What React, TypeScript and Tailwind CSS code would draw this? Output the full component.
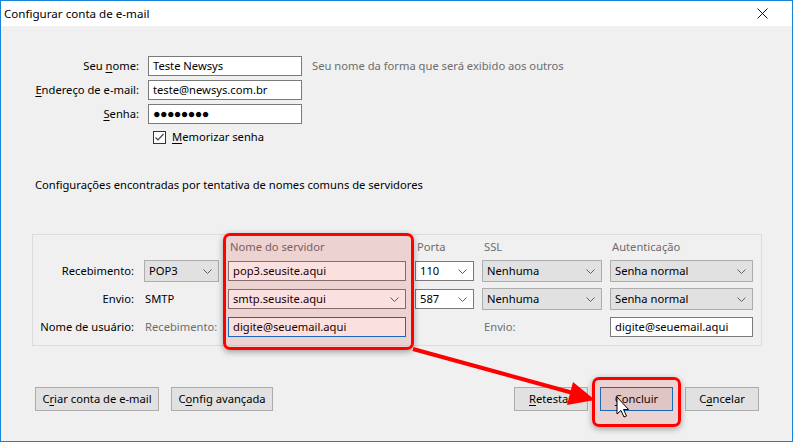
import React from "react";

const font = { fontFamily: '"Noto Sans", "Segoe UI", Arial, sans-serif' };

function Chevron({ className = "" }: { className?: string }) {
  return (
    <svg width="9" height="5" viewBox="0 0 9 5" className={className}>
      <path d="M0.5 0.5 L4.5 4.5 L8.5 0.5" fill="none" stroke="#606060" strokeWidth="1" />
    </svg>
  );
}

function TextBox({ value, w, focus = false }: { value: string; w: string; focus?: boolean }) {
  return (
    <div
      className={`${w} h-[20px] bg-white border flex items-center pl-[4px] text-black ${
        focus ? "border-[#0078d7]" : "border-[#7a7a7a]"
      }`}
    >
      {value}
    </div>
  );
}

function Select({ value, w, white = false }: { value: string; w: string; white?: boolean }) {
  return (
    <div
      className={`${w} flex items-center justify-between border pl-[4px] pr-[6px] ${
        white ? "h-[20px] bg-white border-[#7a7a7a]" : "h-[22px] bg-[#e1e1e1] border-[#adadad]"
      }`}
    >
      <span>{value}</span>
      <Chevron />
    </div>
  );
}

function Button({ children, w, primary = false }: { children: React.ReactNode; w: string; primary?: boolean }) {
  return (
    <div
      className={`${w} h-[24px] flex items-center justify-center bg-[#e1e1e1] border ${
        primary ? "border-[#0078d7]" : "border-[#adadad]"
      }`}
    >
      {children}
    </div>
  );
}

export default function App() {
  return (
    <div
      style={font}
      className="relative w-[793px] h-[442px] border border-[#1883d7] bg-[#f0f0f0] flex flex-col text-[11.2px] text-black overflow-hidden"
    >
      <div className="h-[25px] bg-white flex items-center justify-between pl-[3px] pr-[24px] shrink-0 text-[11.6px]">
        <span>Configurar conta de e-mail</span>
        <svg width="11" height="11" viewBox="0 0 11 11">
          <path d="M0.5 0.5 L10.5 10.5 M10.5 0.5 L0.5 10.5" stroke="#111" strokeWidth="1" />
        </svg>
      </div>

      <div className="flex flex-col">
        {/* account fields */}
        <div className="mt-[30px] flex flex-col gap-[4px]">
          <div className="flex items-center h-[20px]">
            <div className="w-[138px] text-right">
              Seu <u className="underline-offset-2">n</u>ome:
            </div>
            <div className="ml-[9px]">
              <TextBox value="Teste Newsys" w="w-[154px]" />
            </div>
            <div className="ml-[10px] text-[#6d6d6d]">Seu nome da forma que será exibido aos outros</div>
          </div>
          <div className="flex items-center h-[20px]">
            <div className="w-[138px] text-right">
              <u className="underline-offset-2">E</u>ndereço de e-mail:
            </div>
            <div className="ml-[9px]">
              <TextBox value="teste@newsys.com.br" w="w-[154px]" />
            </div>
          </div>
          <div className="flex items-center h-[20px]">
            <div className="w-[138px] text-right">
              <u className="underline-offset-2">S</u>enha:
            </div>
            <div className="ml-[9px]">
              <TextBox value="●●●●●●●●" w="w-[154px] text-[12.5px] tracking-[-0.6px]" />
            </div>
          </div>
        </div>

        <div className="mt-[6px] ml-[152px] flex items-center h-[14px]">
          <div className="w-[13px] h-[13px] border border-[#333] bg-white flex items-center justify-center">
            <svg width="11" height="11" viewBox="0 0 11 11">
              <path d="M1.5 5.5 L4 8 L9.5 2" fill="none" stroke="#444" strokeWidth="1.2" />
            </svg>
          </div>
          <span className="ml-[6px]">
            <u className="underline-offset-2">M</u>emorizar senha
          </span>
        </div>

        <div className="mt-[33px] ml-[34px] h-[16px] leading-[16px]">
          Configurações encontradas por tentativa de nomes comuns de servidores
        </div>

        {/* server group */}
        <div className="mt-[41px] ml-[31px] w-[730px] h-[112px] border border-[#dcdcdc] flex flex-col">
          <div className="mt-[4px] h-[16px] leading-[16px] flex text-[#6d6d6d]">
            <div className="w-[197px]" />
            <div className="w-[187px]">Nome do servidor</div>
            <div className="w-[67px]">Porta</div>
            <div className="w-[128px]">SSL</div>
            <div>Autenticação</div>
          </div>

          <div className="mt-[5px] h-[22px] flex items-center">
            <div className="w-[101px] text-right">Recebimento:</div>
            <div className="ml-[10px]">
              <Select value="POP3" w="w-[75px]" />
            </div>
            <div className="ml-[9px]">
              <TextBox value="pop3.seusite.aqui" w="w-[178px]" />
            </div>
            <div className="ml-[9px]">
              <Select value="110" w="w-[59px]" white />
            </div>
            <div className="ml-[8px]">
              <Select value="Nenhuma" w="w-[120px]" />
            </div>
            <div className="ml-[8px]">
              <Select value="Senha normal" w="w-[143px]" />
            </div>
          </div>

          <div className="mt-[6px] h-[22px] flex items-center">
            <div className="w-[101px] text-right">Envio:</div>
            <div className="ml-[10px] w-[75px] pl-[1px]">SMTP</div>
            <div className="ml-[9px]">
              <Select value="smtp.seusite.aqui" w="w-[178px]" white />
            </div>
            <div className="ml-[9px]">
              <Select value="587" w="w-[59px]" white />
            </div>
            <div className="ml-[8px]">
              <Select value="Nenhuma" w="w-[120px]" />
            </div>
            <div className="ml-[8px]">
              <Select value="Senha normal" w="w-[143px]" />
            </div>
          </div>

          <div className="mt-[7px] h-[20px] flex items-center">
            <div className="w-[101px] text-right">Nome de usuário:</div>
            <div className="ml-[10px] w-[75px] pl-[1px] text-[#6d6d6d]">Recebimento:</div>
            <div className="ml-[9px]">
              <TextBox value="digite@seuemail.aqui" w="w-[178px]" focus />
            </div>
            <div className="ml-[9px] w-[59px]" />
            <div className="ml-[8px] w-[120px] pl-[2px] text-[#6d6d6d]">Envio:</div>
            <div className="ml-[8px]">
              <TextBox value="digite@seuemail.aqui" w="w-[143px]" />
            </div>
          </div>
        </div>

        {/* buttons */}
        <div className="mt-[41px] pl-[34px] pr-[33px] flex items-center">
          <Button w="w-[124px]">
            <span>
              C<u className="underline-offset-2">r</u>iar conta de e-mail
            </span>
          </Button>
          <div className="ml-[12px]">
            <Button w="w-[102px]">
              <span>
                C<u className="underline-offset-2">o</u>nfig avançada
              </span>
            </Button>
          </div>
          <div className="ml-auto flex gap-[12px]">
            <Button w="w-[74px]">
              <span>
                <u className="underline-offset-2">R</u>etestar
              </span>
            </Button>
            <Button w="w-[73px]" primary>
              <span>
                <u className="underline-offset-2">C</u>oncluir
              </span>
            </Button>
            <Button w="w-[74px]">
              <span>
                C<u className="underline-offset-2">a</u>ncelar
              </span>
            </Button>
          </div>
        </div>
      </div>

      {/* annotations */}
      <div className="absolute left-[222px] top-[232px] w-[191px] h-[117px] rounded-[7px] border-[3px] border-[#ff0000] bg-[rgba(220,0,0,0.12)] shadow-[0_2px_6px_rgba(0,0,0,0.35)]" />
      <div className="absolute left-[591px] top-[376px] w-[89px] h-[50px] rounded-[7px] border-[3px] border-[#ff0000] bg-[rgba(220,0,0,0.12)] shadow-[0_2px_6px_rgba(0,0,0,0.35)]" />
      <svg className="absolute left-0 top-0 pointer-events-none" width="793" height="442" viewBox="0 0 793 442">
        <line x1="412" y1="348" x2="572" y2="392" stroke="#ff0000" strokeWidth="4" />
        <polygon points="594,399 566,404 572,381" fill="#ff0000" />
        <path
          d="M616 396 L616 413 L620 409.5 L623 416 L625.5 415 L622.5 408.5 L627.5 408.5 Z"
          fill="#fff"
          stroke="#000"
          strokeWidth="1"
          strokeLinejoin="round"
        />
      </svg>
    </div>
  );
}
